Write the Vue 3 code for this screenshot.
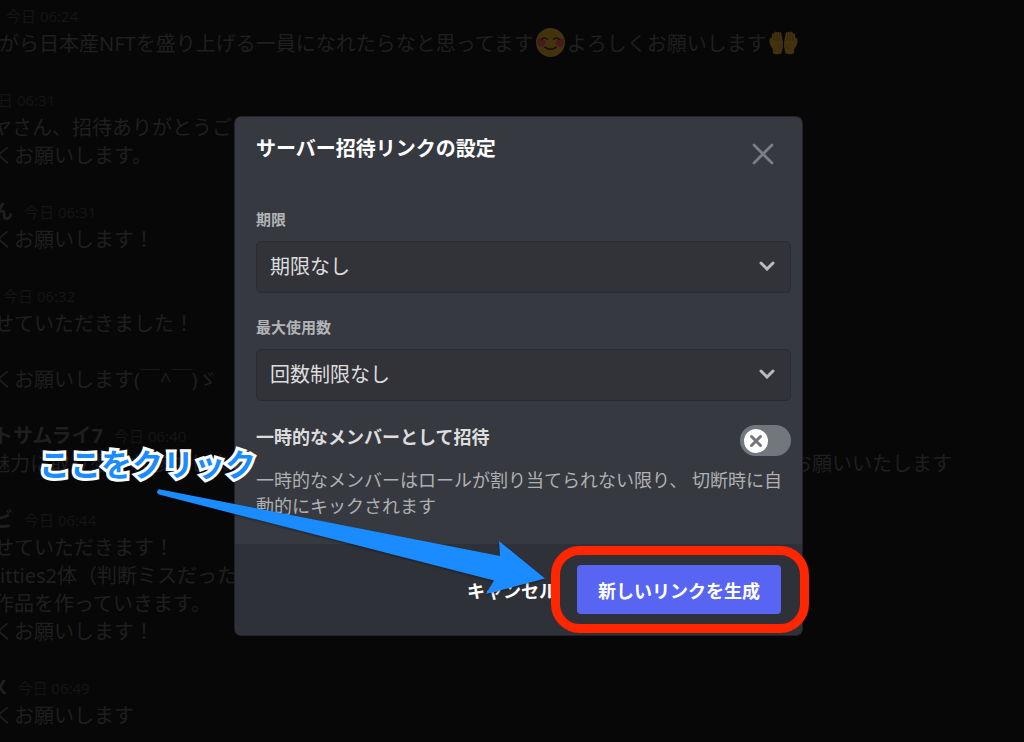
<script setup>
import { ref } from 'vue'

const expiry = ref('never')
const maxUses = ref('unlimited')
const temporary = ref(false)

const messages = [
  { name: '', shift: -5, time: '今日 06:24', lines: [{ text: 'がら日本産NFTを盛り上げる一員になれたらなと思ってます', smile: true, after: 'よろしくお願いします', hands: true, shift: -1 }] },
  { name: '', shift: -28, time: '今日 06:31', lines: [{ text: 'ヤさん、招待ありがとうご', shift: -8 }, { text: 'くお願いします。', shift: -6 }] },
  { name: 'ん', shift: -7, time: '今日 06:31', lines: [{ text: 'くお願いします！', shift: -6 }] },
  { name: '', shift: -8, time: '今日 06:32', lines: [{ text: 'せていただきました！', shift: -6 }, { text: '', shift: 0 }, { text: 'くお願いします(￣^￣)ゞ', shift: -6 }] },
  { name: 'トサムライ7', shift: -7, time: '今日 06:40', lines: [{ text: '魅力に取り憑かれ参加しま', tail: 'お願いいたします', shift: -10 }] },
  { name: 'ビ', shift: -7, time: '今日 06:44', lines: [{ text: 'せていただきます！', shift: -6 }, { text: 'itties2体（判断ミスだった', shift: 0 }, { text: '作品を作っていきます。', shift: -6 }, { text: 'くお願いします！', shift: -6 }] },
  { name: 'X', shift: -7, time: '今日 06:49', lines: [{ text: 'くお願いします', shift: -6 }] }
]
</script>

<template>
  <main class="screen">
    <section class="chat" aria-label="チャット">
      <article v-for="(m, i) in messages" :key="i" class="message">
        <header class="meta" :style="{ marginLeft: m.shift + 'px' }">
          <strong class="author">{{ m.name }}</strong>
          <time class="time">{{ m.time }}</time>
        </header>
        <p v-for="(l, j) in m.lines" :key="j" class="line" :style="{ marginLeft: l.shift + 'px' }">
          <span>{{ l.text }}</span>
          <svg v-if="l.smile" class="emoji" viewBox="0 0 28 28" aria-hidden="true">
            <circle cx="14" cy="14" r="14" fill="#42320d" />
            <circle cx="5" cy="14" r="4" fill="#451c1c" />
            <circle cx="23" cy="14" r="4" fill="#451c1c" />
            <path d="M5.5 11q2.500-3 5.500 0M17 11q2.500-3 5.500 0M8.500 18.500q5.500 4 11 0" fill="none" stroke="#170e06" stroke-width="1.300" stroke-linecap="round" />
          </svg>
          <span v-if="l.after">{{ l.after }}</span>
          <svg v-if="l.hands" class="emoji" viewBox="0 0 28 28" aria-hidden="true">
            <path d="M4 24.500L3.500 20Q0 16 .5 11Q1 9 2.500 10L3 6Q3.500 4.500 4.700 5.500L5.500 4Q6.700 2.500 7.800 4.500Q9 2.500 10 4.500Q11.500 3 12 5.500L13 11Q14 15 13.500 18L12 24.500Q8 26 4 24.500Z" fill="#42320d" />
            <path d="M24 24.500L24.500 20Q28 16 27.500 11Q27 9 25.500 10L25 6Q24.500 4.500 23.300 5.500L22.500 4Q21.300 2.500 20.200 4.500Q19 2.500 18 4.500Q16.500 3 16 5.500L15 11Q14 15 14.500 18L16 24.500Q20 26 24 24.500Z" fill="#42320d" />
            <path d="M5 6.500v6M7.700 5.500v7M10.200 5.500v7M23 6.500v6M20.300 5.500v7M17.800 5.500v7M9 20q3-2 4-5M19 20q-3-2-4-5" fill="none" stroke="#30240a" stroke-width=".7" />
          </svg>
          <span v-if="l.tail" class="tail">{{ l.tail }}</span>
        </p>
      </article>
    </section>

    <div class="overlay">
      <form class="modal" role="dialog" aria-labelledby="dialog-title" @submit.prevent>
        <div class="body">
          <header class="top">
            <h1 id="dialog-title">サーバー招待リンクの設定</h1>
            <button type="button" class="close" aria-label="閉じる">
              <svg viewBox="0 0 22 22" aria-hidden="true"><path d="M2 2l18 18M20 2L2 20" /></svg>
            </button>
          </header>

          <div class="field">
            <label for="expiry">期限</label>
            <div class="picker">
              <select id="expiry" v-model="expiry"><option value="never">期限なし</option></select>
              <svg viewBox="0 0 16 10" aria-hidden="true"><path d="M2 2l6 6 6-6" /></svg>
            </div>
          </div>
          <div class="field">
            <label for="uses">最大使用数</label>
            <div class="picker">
              <select id="uses" v-model="maxUses"><option value="unlimited">回数制限なし</option></select>
              <svg viewBox="0 0 16 10" aria-hidden="true"><path d="M2 2l6 6 6-6" /></svg>
            </div>
          </div>

          <div class="toggle-row">
            <label for="temporary">一時的なメンバーとして招待</label>
            <span class="switch">
              <input id="temporary" v-model="temporary" type="checkbox" role="switch" aria-describedby="temporary-note" />
              <span class="knob" aria-hidden="true">
                <svg viewBox="0 0 24 24"><path d="M7.500 7.500l9 9M16.500 7.500l-9 9" /></svg>
              </span>
            </span>
          </div>
          <p id="temporary-note" class="note">一時的なメンバーはロールが割り当てられない限り、 切断時に自動的にキックされます</p>
        </div>

        <footer class="actions">
          <button type="button" class="cancel">キャンセル</button>
          <div class="primary-wrap">
            <button type="submit" class="primary">新しいリンクを生成</button>
            <span class="ring" aria-hidden="true"></span>
          </div>
        </footer>

        <div class="callout">
          <p>ここをクリック</p>
          <svg viewBox="0 0 400 120" aria-hidden="true">
            <path d="M7.500 14.500L347 81L346 66L392 103.500L333 119L341 105.500L6 19.500A2.600 2.600 0 0 1 7.500 14.500Z" />
          </svg>
        </div>
      </form>
    </div>
  </main>
</template>

<style>
html, body { margin: 0; background: #070707; }
</style>

<style scoped>
.screen {
  position: relative;
  min-height: 100vh;
  overflow: hidden;
  background: #070707;
  font-family: "Noto Sans", "Noto Sans CJK JP", sans-serif;
  font-size: 20px;
}
.screen * { box-sizing: border-box; }
p, h1 { margin: 0; }
button, select { font-family: inherit; }

.chat {
  display: flex;
  flex-direction: column;
  gap: 28px;
  color: #1f1f20;
  white-space: nowrap;
}
.meta, .line { display: flex; align-items: center; height: 28px; }
.meta { gap: 11px; }
.author { font-weight: 700; }
.time { font-size: 15px; color: #131516; padding-top: 2px; }
.emoji { width: 29px; height: 29px; margin: 0 2px; flex: none; }
.tail { margin-left: 562px; }

.overlay {
  position: absolute;
  inset: 0;
  display: flex;
  align-items: center;
  justify-content: center;
  padding: 10px 0 0 13px;
}
.modal {
  position: relative;
  width: 567px;
  border-radius: 6px;
  background: #36393f;
  box-shadow: 0 0 0 1px #202225;
}
.body { padding: 16px 11px 25px 21px; }
.top {
  display: flex;
  align-items: flex-start;
  justify-content: space-between;
  padding-right: 17px;
}
h1 { font-size: 20px; line-height: 32px; font-weight: 700; color: #fff; }
.close { margin-top: 10px; padding: 0; width: 22px; height: 22px; border: 0; background: none; }
.close svg { display: block; stroke: #7b7e82; stroke-width: 2.800; stroke-linecap: round; }
.field { margin-top: 24px; }
.top + .field { margin-top: 44px; }
.field label { display: block; font-size: 15px; line-height: 20px; font-weight: 700; color: #b2b4b8; }
.picker { position: relative; margin-top: 12px; }
.picker select {
  appearance: none;
  display: block;
  width: 100%;
  height: 52px;
  padding: 0 48px 2px 13px;
  border: 1px solid #2b2c31;
  border-radius: 5px;
  background: #323338;
  color: #dcddde;
  font-size: 20px;
}
.picker svg {
  position: absolute;
  right: 16px;
  top: 20px;
  width: 16px;
  height: 10px;
  fill: none;
  stroke: #b9bbbe;
  stroke-width: 3;
  stroke-linecap: round;
  pointer-events: none;
}
.toggle-row { display: flex; justify-content: space-between; margin-top: 24px; }
.toggle-row label { font-size: 18px; line-height: 24px; font-weight: 700; color: #dcddde; }
.switch { position: relative; display: block; width: 51px; height: 31px; }
.switch input { appearance: none; display: block; width: 51px; height: 31px; margin: 0; border-radius: 16px; background: #72767d; }
.knob {
  position: absolute;
  left: 4px;
  top: 4px;
  width: 24px;
  height: 24px;
  border-radius: 50%;
  background: #fff;
  pointer-events: none;
}
.knob svg { display: block; stroke: #72767d; stroke-width: 3; stroke-linecap: round; }
.note { margin-top: 11px; font-size: 18px; line-height: 26px; color: #aeb0b3; }
.actions {
  display: flex;
  align-items: center;
  justify-content: flex-end;
  gap: 20px;
  padding: 21px;
  border-radius: 0 0 6px 6px;
  background: #2f3138;
}
.actions button { font-size: 18px; font-weight: 700; color: #fff; border: 0; white-space: nowrap; }
.cancel { padding: 0; background: none; }
.primary-wrap { position: relative; }
.primary { display: block; height: 49px; padding: 0 21px; border-radius: 4px; background: #5865f2; }
.ring {
  position: absolute;
  inset: -19px -28px -19px -26px;
  border: 9px solid #ff2600;
  border-radius: 29px;
  pointer-events: none;
}
.callout { position: absolute; left: -196px; top: 325px; width: 400px; pointer-events: none; }
.callout p {
  font-size: 31px;
  line-height: 44px;
  font-weight: 700;
  color: #1a8cff;
  -webkit-text-stroke: 6px #fff;
  paint-order: stroke fill;
  white-space: nowrap;
}
.callout svg {
  position: absolute;
  left: 114px;
  top: 33px;
  width: 400px;
  height: 120px;
  fill: #1a8cff;
  filter: drop-shadow(0 1px 1px rgba(0, 0, 0, 0.4));
}
</style>
